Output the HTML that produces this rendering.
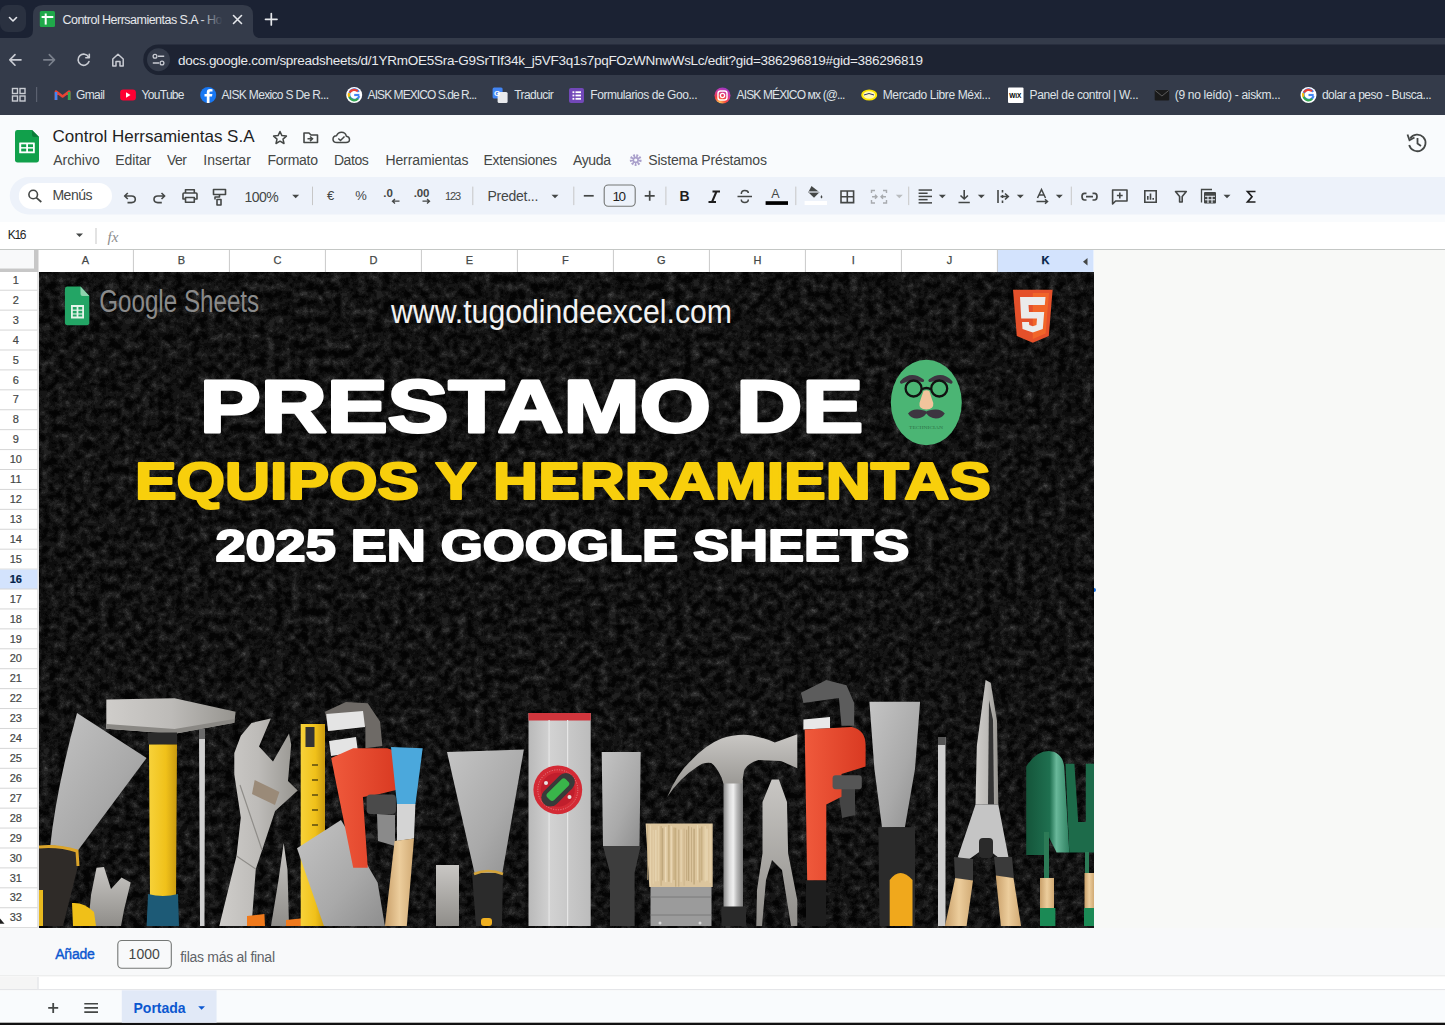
<!DOCTYPE html>
<html><head><meta charset="utf-8">
<style>
*{margin:0;padding:0}
html,body{width:1445px;height:1025px;overflow:hidden;background:#fff}
svg{position:absolute;left:0;top:0}
text{font-family:"Liberation Sans", sans-serif;white-space:pre}
.a{position:absolute}
</style></head><body>
<svg width="1445" height="1025" viewBox="0 0 1445 1025">
<rect x="0" y="0" width="1445" height="38" fill="#1b2233" rx="0" /><rect x="0" y="38" width="1445" height="77" fill="#343b4a" rx="0" /><rect x="0" y="5" width="26" height="27" fill="#2a3140" rx="8" /><path d="M9.5 17.5 L13 21 L16.5 17.5" stroke="#e3e5ea" stroke-width="1.6" fill="none" stroke-linecap="round" stroke-linejoin="round"/><path d="M25 38 Q33 38 33 30 V15 Q33 5 43 5 H243 Q253 5 253 15 V30 Q253 38 261 38Z" fill="#343b4a"/><rect x="39.8" y="11.1" width="15.2" height="15.8" fill="#20a84a" rx="1.5" /><rect x="41.6" y="16" width="11.7" height="2" fill="#ffffff" rx="0" /><rect x="44.7" y="13.5" width="2" height="11.1" fill="#ffffff" rx="0" /><defs><linearGradient id="tabfade" x1="0" x2="1" y1="0" y2="0"><stop offset="0.86" stop-color="#e6e8ec" stop-opacity="1"/><stop offset="1" stop-color="#e6e8ec" stop-opacity="0"/></linearGradient></defs><text x="62.5" y="24" font-size="12.5" fill="url(#tabfade)" font-weight="400" textLength="160" lengthAdjust="spacing" >Control Herrsamientas S.A - Ho</text><path d="M233.5 15.5 L241.5 23.5 M241.5 15.5 L233.5 23.5" stroke="#e6e8ec" stroke-width="1.6" stroke-linecap="round"/><path d="M271.3 13.5 V25 M265.5 19.3 H277" stroke="#e6e8ec" stroke-width="1.7" stroke-linecap="round"/><path d="M21 59.9 H9.8 M15 54.6 L9.8 59.9 L15 65.2" stroke="#c9ccd3" stroke-width="1.6" fill="none" stroke-linecap="round" stroke-linejoin="round"/><path d="M43.8 59.9 H54.5 M49.3 54.6 L54.5 59.9 L49.3 65.2" stroke="#7a808c" stroke-width="1.6" fill="none" stroke-linecap="round" stroke-linejoin="round"/><path d="M88.6 57 A5.6 5.6 0 1 0 89 61.5" stroke="#c9ccd3" stroke-width="1.6" fill="none" stroke-linecap="round"/><path d="M89.3 54.3 V57.8 H85.8" stroke="#c9ccd3" stroke-width="1.6" fill="none" stroke-linecap="round" stroke-linejoin="round"/><path d="M112.8 66 V59 L118 54.2 L123.2 59 V66 H120 V61.5 H116 V66Z" stroke="#c9ccd3" stroke-width="1.5" fill="none" stroke-linejoin="round"/><path d="M158.5 44.4 H1445 V74.9 H158.5 A15.25 15.25 0 0 1 158.5 44.4Z" fill="#1d2332"/><circle cx="158.5" cy="59.7" r="11.5" fill="#343b4a"/><circle cx="155" cy="56.3" r="1.9" stroke="#c9ccd3" stroke-width="1.3" fill="none"/><path d="M158 56.3 H164.2 M152.8 63 H159" stroke="#c9ccd3" stroke-width="1.5"/><circle cx="162" cy="63" r="1.9" stroke="#c9ccd3" stroke-width="1.3" fill="none"/><text x="178" y="64.8" font-size="13.5" fill="#e8eaed" font-weight="400" textLength="745" lengthAdjust="spacing" >docs.google.com/spreadsheets/d/1YRmOE5Sra-G9SrTIf34k_j5VF3q1s7pqFOzWNnwWsLc/edit?gid=386296819#gid=386296819</text><rect x="12.5" y="88.5" width="5" height="5" stroke="#c9ccd3" stroke-width="1.4" fill="none"/><rect x="12.5" y="96.0" width="5" height="5" stroke="#c9ccd3" stroke-width="1.4" fill="none"/><rect x="20.0" y="88.5" width="5" height="5" stroke="#c9ccd3" stroke-width="1.4" fill="none"/><rect x="20.0" y="96.0" width="5" height="5" stroke="#c9ccd3" stroke-width="1.4" fill="none"/><rect x="36" y="87" width="1.2" height="15" fill="#5b6170" rx="0" /><path d="M56 100 V91.5 L62.6 96.5 L69.2 91.5 V100" stroke="#ea4335" stroke-width="2.6" fill="none" stroke-linejoin="round"/><path d="M56 100 V92" stroke="#4285f4" stroke-width="2.6"/><path d="M69.2 100 V92" stroke="#34a853" stroke-width="2.6"/><text x="76.1" y="99.4" font-size="12" fill="#dfe2e7" font-weight="400" textLength="28.7" lengthAdjust="spacing" >Gmail</text><rect x="120.2" y="89.5" width="15.7" height="11" fill="#ff0033" rx="3" /><path d="M126 92.3 V97.7 L130.5 95Z" fill="#fff"/><text x="141.6" y="99.4" font-size="12" fill="#dfe2e7" font-weight="400" textLength="42.9" lengthAdjust="spacing" >YouTube</text><circle cx="208.2" cy="95" r="8" fill="#1877f2"/><path d="M209.5 103 V96.5 H212 L212.4 94 H209.5 V92.6 Q209.5 91.5 210.8 91.5 H212.5 V89.3 Q211.5 89.1 210.2 89.1 Q206.8 89.1 206.8 92.3 V94 H204.5 V96.5 H206.8 V103Z" fill="#fff"/><text x="221.4" y="99.4" font-size="12" fill="#dfe2e7" font-weight="400" textLength="107.6" lengthAdjust="spacing" >AISK Mexico S De R...</text><circle cx="354.2" cy="95" r="8" fill="#fff"/><path d="M358.8 91.8 A5.2 5.2 0 1 0 359.3 96.2" stroke="#4285f4" stroke-width="2.2" fill="none"/><path d="M349.7 92.4 A5.2 5.2 0 0 1 357.7 91.2" stroke="#ea4335" stroke-width="2.2" fill="none"/><path d="M349.2 96.5 A5.2 5.2 0 0 0 357.9 98.7" stroke="#34a853" stroke-width="2.2" fill="none"/><path d="M349.0 93 A5.2 5.2 0 0 0 349.2 96.8" stroke="#fbbc05" stroke-width="2.2" fill="none"/><path d="M354.2 95 H359.4" stroke="#4285f4" stroke-width="2.2"/><text x="367.6" y="99.4" font-size="12" fill="#dfe2e7" font-weight="400" textLength="109.4" lengthAdjust="spacing" >AISK MEXICO S.de R...</text><rect x="492.6" y="87.5" width="10" height="11" fill="#4285f4" rx="1.5" /><rect x="497.6" y="92" width="10" height="11" fill="#e8eaed" rx="1.5" /><text x="494.1" y="96" font-size="8" fill="#fff" font-weight="700" >G</text><text x="514.2" y="99.4" font-size="12" fill="#dfe2e7" font-weight="400" textLength="39.6" lengthAdjust="spacing" >Traducir</text><rect x="569" y="88" width="15" height="15" fill="#7248b9" rx="2" /><rect x="572.5" y="91.3" width="1.8" height="1.8" fill="#fff" rx="0" /><rect x="575.5" y="91.3" width="5.5" height="1.8" fill="#fff" rx="0" /><rect x="572.5" y="94.6" width="1.8" height="1.8" fill="#fff" rx="0" /><rect x="575.5" y="94.6" width="5.5" height="1.8" fill="#fff" rx="0" /><rect x="572.5" y="97.89999999999999" width="1.8" height="1.8" fill="#fff" rx="0" /><rect x="575.5" y="97.89999999999999" width="5.5" height="1.8" fill="#fff" rx="0" /><text x="590.3" y="99.4" font-size="12" fill="#dfe2e7" font-weight="400" textLength="107.3" lengthAdjust="spacing" >Formularios de Goo...</text><defs><radialGradient id="igg" cx="0.3" cy="1" r="1.2"><stop offset="0" stop-color="#fdd459"/><stop offset="0.35" stop-color="#f9423a"/><stop offset="0.7" stop-color="#c837ab"/><stop offset="1" stop-color="#6f3cd4"/></radialGradient></defs><circle cx="722.5" cy="95.5" r="8" fill="url(#igg)"/><rect x="718" y="91" width="9" height="9" fill="none" rx="2.5" stroke="#fff" stroke-width="1.4"/><circle cx="722.5" cy="95.5" r="2.1" stroke="#fff" stroke-width="1.3" fill="none"/><text x="736.5" y="99.4" font-size="12" fill="#dfe2e7" font-weight="400" textLength="108.9" lengthAdjust="spacing" >AISK MÉXICO мх (@...</text><ellipse cx="869.2" cy="95" rx="8" ry="5.5" fill="#ffe600"/><ellipse cx="869.2" cy="95" rx="6" ry="3.8" fill="#fff" opacity="0.7"/><path d="M864 95 Q869 92 874 95" stroke="#2d3277" stroke-width="1" fill="none"/><text x="882.7" y="99.4" font-size="12" fill="#dfe2e7" font-weight="400" textLength="108.2" lengthAdjust="spacing" >Mercado Libre Méxi...</text><rect x="1008" y="87.5" width="15.5" height="15.5" fill="#ffffff" rx="1" /><text x="1009.2" y="98" font-size="6.5" fill="#000" font-weight="700" >WiX</text><text x="1029.5" y="99.4" font-size="12" fill="#dfe2e7" font-weight="400" textLength="109.1" lengthAdjust="spacing" >Panel de control | W...</text><rect x="1154.7" y="90" width="14.5" height="10.5" fill="#1a1a1a" rx="1" /><path d="M1155.2 90.5 L1161.95 96 L1168.7 90.5" stroke="#5a5a5a" stroke-width="1" fill="none"/><text x="1174.8" y="99.4" font-size="12" fill="#dfe2e7" font-weight="400" textLength="105.8" lengthAdjust="spacing" >(9 no leído) - aiskm...</text><circle cx="1308.5" cy="95" r="8" fill="#fff"/><path d="M1313.1 91.8 A5.2 5.2 0 1 0 1313.6 96.2" stroke="#4285f4" stroke-width="2.2" fill="none"/><path d="M1304.0 92.4 A5.2 5.2 0 0 1 1312.0 91.2" stroke="#ea4335" stroke-width="2.2" fill="none"/><path d="M1303.5 96.5 A5.2 5.2 0 0 0 1312.2 98.7" stroke="#34a853" stroke-width="2.2" fill="none"/><path d="M1303.3 93 A5.2 5.2 0 0 0 1303.5 96.8" stroke="#fbbc05" stroke-width="2.2" fill="none"/><path d="M1308.5 95 H1313.7" stroke="#4285f4" stroke-width="2.2"/><text x="1321.9" y="99.4" font-size="12" fill="#dfe2e7" font-weight="400" textLength="109.7" lengthAdjust="spacing" >dolar a peso - Busca...</text><rect x="0" y="115" width="1445" height="107" fill="#f9fbfd" rx="0" /><rect x="0" y="222" width="1445" height="27.5" fill="#ffffff" rx="0" /><path d="M17 130 H32 L39 137 V159.8 Q39 162.4 36.4 162.4 H17.6 Q15 162.4 15 159.8 V132.6 Q15 130 17 130Z" fill="#11a04b"/><path d="M32 130 V135 Q32 137 34 137 H39Z" fill="#0b7d39"/><rect x="19.2" y="142.5" width="15.6" height="10.7" fill="#ffffff" rx="0.5" /><rect x="21.2" y="144.3" width="5" height="2.8" fill="#11a04b" rx="0" /><rect x="28" y="144.3" width="5" height="2.8" fill="#11a04b" rx="0" /><rect x="21.2" y="148.6" width="5" height="2.8" fill="#11a04b" rx="0" /><rect x="28" y="148.6" width="5" height="2.8" fill="#11a04b" rx="0" /><text x="52.5" y="142" font-size="17" fill="#1f1f1f" font-weight="400" textLength="202" lengthAdjust="spacing" >Control Herrsamientas S.A</text><path d="M280 131.5 L281.9 135.6 L286.4 136.1 L283 139.1 L284 143.5 L280 141.2 L276 143.5 L277 139.1 L273.6 136.1 L278.1 135.6Z" stroke="#444746" stroke-width="1.5" fill="none" stroke-linejoin="round"/><path d="M304 133 H309 L311 135 H317.5 V142.5 H304Z" stroke="#444746" stroke-width="1.6" fill="none" stroke-linejoin="round"/><path d="M307.5 138.8 H312 M310 136.5 L312.5 138.8 L310 141.1" stroke="#444746" stroke-width="1.5" fill="none"/><path d="M337 142.5 Q333 142.5 333 139.2 Q333 136 336.5 135.8 Q338 132.3 341.5 132.3 Q345.5 132.3 346.3 136.2 Q349.5 136.5 349.5 139.5 Q349.5 142.5 346 142.5Z" stroke="#444746" stroke-width="1.5" fill="none" stroke-linejoin="round"/><path d="M338.3 138.5 L340.5 140.5 L344.5 136.5" stroke="#444746" stroke-width="1.5" fill="none"/><text x="53.2" y="164.6" font-size="14" fill="#444746" font-weight="400" textLength="46.5" lengthAdjust="spacing" >Archivo</text><text x="115.3" y="164.6" font-size="14" fill="#444746" font-weight="400" textLength="35.9" lengthAdjust="spacing" >Editar</text><text x="167.1" y="164.6" font-size="14" fill="#444746" font-weight="400" textLength="19.9" lengthAdjust="spacing" >Ver</text><text x="203.3" y="164.6" font-size="14" fill="#444746" font-weight="400" textLength="47.5" lengthAdjust="spacing" >Insertar</text><text x="267.4" y="164.6" font-size="14" fill="#444746" font-weight="400" textLength="50.6" lengthAdjust="spacing" >Formato</text><text x="333.9" y="164.6" font-size="14" fill="#444746" font-weight="400" textLength="34.9" lengthAdjust="spacing" >Datos</text><text x="385.4" y="164.6" font-size="14" fill="#444746" font-weight="400" textLength="83.0" lengthAdjust="spacing" >Herramientas</text><text x="483.5" y="164.6" font-size="14" fill="#444746" font-weight="400" textLength="73.5" lengthAdjust="spacing" >Extensiones</text><text x="573" y="164.6" font-size="14" fill="#444746" font-weight="400" textLength="38" lengthAdjust="spacing" >Ayuda</text><text x="648.2" y="164.6" font-size="14" fill="#444746" font-weight="400" textLength="118.8" lengthAdjust="spacing" >Sistema Préstamos</text><g transform="translate(635.7 160)"><circle r="4.3" fill="none" stroke="#a99fcb" stroke-width="3.2" stroke-dasharray="1.7 1.2"/><circle r="3.2" fill="#a99fcb"/><circle r="1.6" fill="#f9fbfd"/></g><path d="M1410.2 138.5 A8.3 8.3 0 1 1 1409.2 145" stroke="#444746" stroke-width="1.8" fill="none"/><path d="M1407.5 134.5 L1409.5 140.2 L1414.5 137.5" stroke="#444746" stroke-width="1.8" fill="none"/><path d="M1417.5 138 V143.5 L1421 146" stroke="#444746" stroke-width="1.8" fill="none"/><path d="M28.5 177 H1445 V214.5 H28.5 A18.75 18.75 0 0 1 28.5 177Z" fill="#edf2fa"/><path d="M31.8 183 H99 A13 13 0 0 1 99 209 H31.8 A13 13 0 0 1 31.8 183Z" fill="#ffffff"/><circle cx="33.2" cy="194.5" r="4.3" stroke="#444746" stroke-width="1.6" fill="none"/><path d="M36.3 197.6 L41.3 202" stroke="#444746" stroke-width="1.7"/><text x="52.4" y="200" font-size="14" fill="#444746" font-weight="400" textLength="40.2" lengthAdjust="spacing" >Menús</text><path d="M125 196 H131.5 Q135.3 196 135.3 199.3 Q135.3 202.6 131.5 202.6 H127.5 M127.8 193 L124.6 196 L127.8 199" stroke="#444746" stroke-width="1.6" fill="none" stroke-linejoin="round"/><path d="M164.3 196 H157.8 Q154 196 154 199.3 Q154 202.6 157.8 202.6 H161.8 M161.5 193 L164.7 196 L161.5 199" stroke="#444746" stroke-width="1.6" fill="none" stroke-linejoin="round"/><path d="M185.5 193 V189.8 H194.3 V193 M185.5 199 H183 V194 Q183 193 184 193 H196 Q197 193 197 194 V199 H194.3 M185.5 197.5 H194.3 V202.2 H185.5Z" stroke="#444746" stroke-width="1.6" fill="none" stroke-linejoin="round"/><path d="M213.5 189.5 H225.5 V194.5 H213.5Z M219.5 194.5 V197 H215 V199.5 M217 199.5 H221 V205 H217Z" stroke="#444746" stroke-width="1.6" fill="none" stroke-linejoin="round"/><text x="244.6" y="201.6" font-size="14" fill="#444746" font-weight="400" textLength="34" lengthAdjust="spacing" >100%</text><path d="M292.2 194.8 H299.2 L295.7 198.3Z" fill="#444746"/><rect x="312" y="186.6" width="1" height="18.5" fill="#c7c7c7" rx="0" /><text x="327" y="199.6" font-size="13" fill="#444746" font-weight="400" >€</text><text x="355.2" y="199.6" font-size="13" fill="#444746" font-weight="400" >%</text><text x="383.2" y="197.4" font-size="11.5" fill="#444746" font-weight="700" >.0</text><path d="M399.5 201.2 H392.5 M395 199 L392.5 201.2 L395 203.4" stroke="#444746" stroke-width="1.3" fill="none"/><text x="413.8" y="197.4" font-size="11.5" fill="#444746" font-weight="700" textLength="15.5" lengthAdjust="spacing" >.00</text><path d="M422.5 201.2 H429.5 M427 199 L429.5 201.2 L427 203.4" stroke="#444746" stroke-width="1.3" fill="none"/><text x="445" y="199.6" font-size="11" fill="#444746" font-weight="400" textLength="16.2" lengthAdjust="spacing" >123</text><rect x="472.3" y="186.6" width="1" height="18.5" fill="#c7c7c7" rx="0" /><text x="487.4" y="200.7" font-size="14" fill="#444746" font-weight="400" textLength="51" lengthAdjust="spacing" >Predet...</text><path d="M551.5 194.8 H558.5 L555.0 198.3Z" fill="#444746"/><rect x="573.3" y="186.6" width="1" height="18.5" fill="#c7c7c7" rx="0" /><path d="M583.8 195.8 H593.7" stroke="#444746" stroke-width="1.7"/><rect x="604.2" y="185" width="31" height="21.2" rx="4" stroke="#747775" stroke-width="1.1" fill="none"/><text x="612.6" y="200.6" font-size="13.5" fill="#1f1f1f" font-weight="400" textLength="13.5" lengthAdjust="spacing" >10</text><path d="M644.7 195.8 H654.7 M649.7 190.8 V200.8" stroke="#444746" stroke-width="1.7"/><rect x="665.4" y="186.6" width="1" height="18.5" fill="#c7c7c7" rx="0" /><text x="679.6" y="201.2" font-size="14" fill="#1f1f1f" font-weight="700" >B</text><path d="M712.5 191.5 H720 M708.5 202 H716 M716.5 191.5 L712 202" stroke="#1f1f1f" stroke-width="2" fill="none"/><path d="M737.5 196.5 H752" stroke="#444746" stroke-width="1.5"/><path d="M741.3 194 Q741.3 190.5 744.8 190.5 Q748.3 190.5 748.3 193 M741.3 199.5 Q741.3 202.5 744.8 202.5 Q748.3 202.5 748.3 199.5" stroke="#444746" stroke-width="1.5" fill="none"/><text x="771.2" y="198.4" font-size="12.5" fill="#444746" font-weight="400" textLength="10.5" lengthAdjust="spacing" >A</text><rect x="765.6" y="201.2" width="22.4" height="3.7" fill="#000000" rx="0" /><rect x="795.3" y="186.6" width="1" height="18.5" fill="#c7c7c7" rx="0" /><path d="M811.5 186 L819.5 192.3 L814 197.8 L808.3 192.2Z" fill="#444746"/><path d="M809 192 H819" stroke="#edf2fa" stroke-width="1.2"/><path d="M821.5 195 Q823.3 197.5 821.5 198.4 Q819.7 197.5 821.5 195Z" fill="#444746"/><rect x="804.6" y="201" width="22.4" height="4" fill="#ffffff" rx="0" /><path d="M841 191 H853.6 V202.6 H841Z M847.3 191 V202.6 M841 196.8 H853.6" stroke="#444746" stroke-width="1.6" fill="none"/><path d="M871.5 193 V190.5 H875 M871.5 200 V203 H875 M886.5 193 V190.5 H883 M886.5 200 V203 H883 M872 196.8 H877 M875 194.8 L877 196.8 L875 198.8 M886 196.8 H881 M883 194.8 L881 196.8 L883 198.8" stroke="#a8abaf" stroke-width="1.4" fill="none"/><path d="M895.8 194.8 H902.8 L899.3 198.3Z" fill="#b9bcbf"/><rect x="908.2" y="186.6" width="1" height="18.5" fill="#c7c7c7" rx="0" /><rect x="918.6" y="189.3" width="13.4" height="1.5" fill="#444746" rx="0" /><rect x="918.6" y="192.5" width="9" height="1.5" fill="#444746" rx="0" /><rect x="918.6" y="195.70000000000002" width="13.4" height="1.5" fill="#444746" rx="0" /><rect x="918.6" y="198.9" width="9" height="1.5" fill="#444746" rx="0" /><rect x="918.6" y="202.10000000000002" width="13.4" height="1.5" fill="#444746" rx="0" /><path d="M938.8 194.8 H945.8 L942.3 198.3Z" fill="#444746"/><path d="M958.5 202.5 H969.8 M964.2 190 V199 M960.5 195.5 L964.2 199 L967.9 195.5" stroke="#444746" stroke-width="1.6" fill="none"/><path d="M977.8 194.8 H984.8 L981.3 198.3Z" fill="#444746"/><path d="M998 190 V203 M1002.5 190 V192.5 M1002.5 195 V198 M1002.5 200.5 V203 M1000.5 196.5 H1008 M1005 193.5 L1008.3 196.5 L1005 199.5" stroke="#444746" stroke-width="1.6" fill="none"/><path d="M1016.8 194.8 H1023.8 L1020.3 198.3Z" fill="#444746"/><path d="M1037.5 198 L1041.5 189.5 L1045.5 198 M1039 195 H1044 M1036.5 201.5 H1047 M1045 199.3 L1047.5 201.5 L1045 203.7" stroke="#444746" stroke-width="1.5" fill="none"/><path d="M1055.8 194.8 H1062.8 L1059.3 198.3Z" fill="#444746"/><rect x="1070.8" y="186.6" width="1" height="18.5" fill="#c7c7c7" rx="0" /><path d="M1086.5 193.3 H1084.5 Q1082 193.3 1082 196.6 Q1082 200 1084.5 200 H1086.5 M1092.5 193.3 H1094.5 Q1097 193.3 1097 196.6 Q1097 200 1094.5 200 H1092.5 M1086 196.6 H1093" stroke="#444746" stroke-width="1.7" fill="none"/><path d="M1112.6 204 V190 H1127 V201 H1115.6Z M1119.8 192.6 V198.4 M1116.9 195.5 H1122.7" stroke="#444746" stroke-width="1.6" fill="none" stroke-linejoin="round"/><path d="M1144.8 190.8 H1156.2 V202.2 H1144.8Z M1147.8 196 V199.8 M1150.5 193.5 V199.8 M1153.2 198 V199.8" stroke="#444746" stroke-width="1.6" fill="none"/><path d="M1175.5 191.5 H1186.3 L1182.2 196.6 V202 H1179.6 V196.6Z" stroke="#444746" stroke-width="1.6" fill="none" stroke-linejoin="round"/><path d="M1201.5 202.5 V189.5 H1212" stroke="#444746" stroke-width="1.3" fill="none"/><rect x="1204" y="192" width="12" height="11.5" rx="1" fill="#444746"/><path d="M1205 196.3 H1215 M1205 199.8 H1215 M1208 196 V203 M1212 196 V203" stroke="#edf2fa" stroke-width="1.1"/><path d="M1223.5 194.8 H1230.5 L1227.0 198.3Z" fill="#444746"/><path d="M1255.5 191.5 H1247.5 L1252 196.8 L1247.5 202 H1255.5" stroke="#1f1f1f" stroke-width="1.7" fill="none" stroke-linejoin="miter"/><text x="7.8" y="239.4" font-size="12" fill="#1f1f1f" font-weight="400" textLength="18.6" lengthAdjust="spacing" >K16</text><path d="M76 233.5 H83 L79.5 237.0Z" fill="#444746"/><rect x="95.5" y="228" width="1" height="16" fill="#c7c7c7" rx="0" /><text x="107.5" y="242" font-size="15" fill="#8c8c8c" font-weight="400" font-style="italic" style="font-family:Liberation Serif">fx</text><rect x="0" y="249" width="1445" height="1" fill="#c4c7c5" rx="0" /><rect x="0" y="250" width="34" height="18.5" fill="#f8f9fa" rx="0" /><rect x="34" y="250" width="4" height="22" fill="#c7c7c7" rx="0" /><rect x="0" y="268.5" width="38" height="3.5" fill="#c7c7c7" rx="0" /><rect x="38" y="250" width="1056" height="22" fill="#ffffff" rx="0" /><rect x="1094" y="250" width="351" height="678" fill="#f8f9f7" rx="0" /><rect x="997" y="250" width="96.5" height="22" fill="#d3e3fd" rx="0" /><rect x="132.9" y="250" width="1" height="22" fill="#c9c9c9" rx="0" /><text x="85.4" y="263.9" font-size="11" fill="#444746" font-weight="400" text-anchor="middle" stroke="#444746" stroke-width="0.25">A</text><rect x="228.9" y="250" width="1" height="22" fill="#c9c9c9" rx="0" /><text x="181.4" y="263.9" font-size="11" fill="#444746" font-weight="400" text-anchor="middle" stroke="#444746" stroke-width="0.25">B</text><rect x="324.9" y="250" width="1" height="22" fill="#c9c9c9" rx="0" /><text x="277.4" y="263.9" font-size="11" fill="#444746" font-weight="400" text-anchor="middle" stroke="#444746" stroke-width="0.25">C</text><rect x="420.9" y="250" width="1" height="22" fill="#c9c9c9" rx="0" /><text x="373.4" y="263.9" font-size="11" fill="#444746" font-weight="400" text-anchor="middle" stroke="#444746" stroke-width="0.25">D</text><rect x="516.9" y="250" width="1" height="22" fill="#c9c9c9" rx="0" /><text x="469.4" y="263.9" font-size="11" fill="#444746" font-weight="400" text-anchor="middle" stroke="#444746" stroke-width="0.25">E</text><rect x="612.9" y="250" width="1" height="22" fill="#c9c9c9" rx="0" /><text x="565.4" y="263.9" font-size="11" fill="#444746" font-weight="400" text-anchor="middle" stroke="#444746" stroke-width="0.25">F</text><rect x="708.9" y="250" width="1" height="22" fill="#c9c9c9" rx="0" /><text x="661.4" y="263.9" font-size="11" fill="#444746" font-weight="400" text-anchor="middle" stroke="#444746" stroke-width="0.25">G</text><rect x="804.9" y="250" width="1" height="22" fill="#c9c9c9" rx="0" /><text x="757.4" y="263.9" font-size="11" fill="#444746" font-weight="400" text-anchor="middle" stroke="#444746" stroke-width="0.25">H</text><rect x="900.9" y="250" width="1" height="22" fill="#c9c9c9" rx="0" /><text x="853.4" y="263.9" font-size="11" fill="#444746" font-weight="400" text-anchor="middle" stroke="#444746" stroke-width="0.25">I</text><rect x="996.9" y="250" width="1" height="22" fill="#c9c9c9" rx="0" /><text x="949.4" y="263.9" font-size="11" fill="#444746" font-weight="400" text-anchor="middle" stroke="#444746" stroke-width="0.25">J</text><text x="1045.4" y="263.9" font-size="11" fill="#041e49" font-weight="700" text-anchor="middle" stroke="#041e49" stroke-width="0.25">K</text><path d="M1087.5 258 V265.5 L1083 261.75Z" fill="#444746"/><rect x="0" y="272" width="38" height="656" fill="#ffffff" rx="0" /><rect x="37.5" y="250" width="1" height="678" fill="#c7c7c7" rx="0" /><rect x="0" y="289.72" width="37.5" height="1" fill="#d6d6d6" rx="0" /><text x="15.8" y="283.9" font-size="11" fill="#444746" font-weight="400" text-anchor="middle" stroke="#444746" stroke-width="0.2">1</text><rect x="0" y="309.64" width="37.5" height="1" fill="#d6d6d6" rx="0" /><text x="15.8" y="303.8" font-size="11" fill="#444746" font-weight="400" text-anchor="middle" stroke="#444746" stroke-width="0.2">2</text><rect x="0" y="329.56" width="37.5" height="1" fill="#d6d6d6" rx="0" /><text x="15.8" y="323.8" font-size="11" fill="#444746" font-weight="400" text-anchor="middle" stroke="#444746" stroke-width="0.2">3</text><rect x="0" y="349.48" width="37.5" height="1" fill="#d6d6d6" rx="0" /><text x="15.8" y="343.7" font-size="11" fill="#444746" font-weight="400" text-anchor="middle" stroke="#444746" stroke-width="0.2">4</text><rect x="0" y="369.4" width="37.5" height="1" fill="#d6d6d6" rx="0" /><text x="15.8" y="363.6" font-size="11" fill="#444746" font-weight="400" text-anchor="middle" stroke="#444746" stroke-width="0.2">5</text><rect x="0" y="389.32" width="37.5" height="1" fill="#d6d6d6" rx="0" /><text x="15.8" y="383.5" font-size="11" fill="#444746" font-weight="400" text-anchor="middle" stroke="#444746" stroke-width="0.2">6</text><rect x="0" y="409.24" width="37.5" height="1" fill="#d6d6d6" rx="0" /><text x="15.8" y="403.4" font-size="11" fill="#444746" font-weight="400" text-anchor="middle" stroke="#444746" stroke-width="0.2">7</text><rect x="0" y="429.16" width="37.5" height="1" fill="#d6d6d6" rx="0" /><text x="15.8" y="423.4" font-size="11" fill="#444746" font-weight="400" text-anchor="middle" stroke="#444746" stroke-width="0.2">8</text><rect x="0" y="449.08" width="37.5" height="1" fill="#d6d6d6" rx="0" /><text x="15.8" y="443.3" font-size="11" fill="#444746" font-weight="400" text-anchor="middle" stroke="#444746" stroke-width="0.2">9</text><rect x="0" y="469.0" width="37.5" height="1" fill="#d6d6d6" rx="0" /><text x="15.8" y="463.2" font-size="11" fill="#444746" font-weight="400" text-anchor="middle" stroke="#444746" stroke-width="0.2">10</text><rect x="0" y="488.92" width="37.5" height="1" fill="#d6d6d6" rx="0" /><text x="15.8" y="483.1" font-size="11" fill="#444746" font-weight="400" text-anchor="middle" stroke="#444746" stroke-width="0.2">11</text><rect x="0" y="508.84" width="37.5" height="1" fill="#d6d6d6" rx="0" /><text x="15.8" y="503.0" font-size="11" fill="#444746" font-weight="400" text-anchor="middle" stroke="#444746" stroke-width="0.2">12</text><rect x="0" y="528.76" width="37.5" height="1" fill="#d6d6d6" rx="0" /><text x="15.8" y="523.0" font-size="11" fill="#444746" font-weight="400" text-anchor="middle" stroke="#444746" stroke-width="0.2">13</text><rect x="0" y="548.68" width="37.5" height="1" fill="#d6d6d6" rx="0" /><text x="15.8" y="542.9" font-size="11" fill="#444746" font-weight="400" text-anchor="middle" stroke="#444746" stroke-width="0.2">14</text><rect x="0" y="568.6" width="37.5" height="1" fill="#d6d6d6" rx="0" /><text x="15.8" y="562.8" font-size="11" fill="#444746" font-weight="400" text-anchor="middle" stroke="#444746" stroke-width="0.2">15</text><rect x="0" y="569.6" width="37.5" height="19.4" fill="#d3e3fd" rx="0" /><rect x="0" y="588.52" width="37.5" height="1" fill="#d6d6d6" rx="0" /><text x="15.8" y="582.7" font-size="11" fill="#041e49" font-weight="700" text-anchor="middle" stroke="#041e49" stroke-width="0.2">16</text><rect x="0" y="608.44" width="37.5" height="1" fill="#d6d6d6" rx="0" /><text x="15.8" y="602.6" font-size="11" fill="#444746" font-weight="400" text-anchor="middle" stroke="#444746" stroke-width="0.2">17</text><rect x="0" y="628.36" width="37.5" height="1" fill="#d6d6d6" rx="0" /><text x="15.8" y="622.6" font-size="11" fill="#444746" font-weight="400" text-anchor="middle" stroke="#444746" stroke-width="0.2">18</text><rect x="0" y="648.28" width="37.5" height="1" fill="#d6d6d6" rx="0" /><text x="15.8" y="642.5" font-size="11" fill="#444746" font-weight="400" text-anchor="middle" stroke="#444746" stroke-width="0.2">19</text><rect x="0" y="668.2" width="37.5" height="1" fill="#d6d6d6" rx="0" /><text x="15.8" y="662.4" font-size="11" fill="#444746" font-weight="400" text-anchor="middle" stroke="#444746" stroke-width="0.2">20</text><rect x="0" y="688.12" width="37.5" height="1" fill="#d6d6d6" rx="0" /><text x="15.8" y="682.3" font-size="11" fill="#444746" font-weight="400" text-anchor="middle" stroke="#444746" stroke-width="0.2">21</text><rect x="0" y="708.04" width="37.5" height="1" fill="#d6d6d6" rx="0" /><text x="15.8" y="702.2" font-size="11" fill="#444746" font-weight="400" text-anchor="middle" stroke="#444746" stroke-width="0.2">22</text><rect x="0" y="727.96" width="37.5" height="1" fill="#d6d6d6" rx="0" /><text x="15.8" y="722.2" font-size="11" fill="#444746" font-weight="400" text-anchor="middle" stroke="#444746" stroke-width="0.2">23</text><rect x="0" y="747.88" width="37.5" height="1" fill="#d6d6d6" rx="0" /><text x="15.8" y="742.1" font-size="11" fill="#444746" font-weight="400" text-anchor="middle" stroke="#444746" stroke-width="0.2">24</text><rect x="0" y="767.8" width="37.5" height="1" fill="#d6d6d6" rx="0" /><text x="15.8" y="762.0" font-size="11" fill="#444746" font-weight="400" text-anchor="middle" stroke="#444746" stroke-width="0.2">25</text><rect x="0" y="787.72" width="37.5" height="1" fill="#d6d6d6" rx="0" /><text x="15.8" y="781.9" font-size="11" fill="#444746" font-weight="400" text-anchor="middle" stroke="#444746" stroke-width="0.2">26</text><rect x="0" y="807.64" width="37.5" height="1" fill="#d6d6d6" rx="0" /><text x="15.8" y="801.8" font-size="11" fill="#444746" font-weight="400" text-anchor="middle" stroke="#444746" stroke-width="0.2">27</text><rect x="0" y="827.56" width="37.5" height="1" fill="#d6d6d6" rx="0" /><text x="15.8" y="821.8" font-size="11" fill="#444746" font-weight="400" text-anchor="middle" stroke="#444746" stroke-width="0.2">28</text><rect x="0" y="847.48" width="37.5" height="1" fill="#d6d6d6" rx="0" /><text x="15.8" y="841.7" font-size="11" fill="#444746" font-weight="400" text-anchor="middle" stroke="#444746" stroke-width="0.2">29</text><rect x="0" y="867.4" width="37.5" height="1" fill="#d6d6d6" rx="0" /><text x="15.8" y="861.6" font-size="11" fill="#444746" font-weight="400" text-anchor="middle" stroke="#444746" stroke-width="0.2">30</text><rect x="0" y="887.32" width="37.5" height="1" fill="#d6d6d6" rx="0" /><text x="15.8" y="881.5" font-size="11" fill="#444746" font-weight="400" text-anchor="middle" stroke="#444746" stroke-width="0.2">31</text><rect x="0" y="907.24" width="37.5" height="1" fill="#d6d6d6" rx="0" /><text x="15.8" y="901.4" font-size="11" fill="#444746" font-weight="400" text-anchor="middle" stroke="#444746" stroke-width="0.2">32</text><rect x="0" y="927.16" width="37.5" height="1" fill="#d6d6d6" rx="0" /><text x="15.8" y="921.4" font-size="11" fill="#444746" font-weight="400" text-anchor="middle" stroke="#444746" stroke-width="0.2">33</text><path d="M0 918.5 L4.5 923.8 H0Z" fill="#1f1f1f"/>
<rect x="0" y="928" width="1445" height="48" fill="#f8f9fa" rx="0" /><rect x="0" y="975.5" width="1445" height="1" fill="#e1e3e1" rx="0" /><rect x="0" y="976.5" width="1445" height="13" fill="#ffffff" rx="0" /><rect x="0" y="976.5" width="37.5" height="13" fill="#f5f5f5" rx="0" /><rect x="37.5" y="977" width="1" height="12" fill="#dadce0" rx="0" /><rect x="0" y="989.3" width="1445" height="1" fill="#dadce0" rx="0" /><rect x="0" y="990.3" width="1445" height="32.4" fill="#f9fbfd" rx="0" /><rect x="0" y="1022.7" width="1445" height="2.3" fill="#111111" rx="0" /><text x="55.2" y="958.8" font-size="14" fill="#0b57d0" font-weight="400" textLength="39.6" lengthAdjust="spacing" stroke="#0b57d0" stroke-width="0.4">Añade</text><rect x="117.8" y="940.5" width="53.5" height="27.7" rx="4" stroke="#747775" stroke-width="1.1" fill="#f8f9fa"/><text x="128.6" y="958.8" font-size="14" fill="#444746" font-weight="400" textLength="31.3" lengthAdjust="spacing" >1000</text><text x="180.2" y="961.5" font-size="14" fill="#5f6368" font-weight="400" textLength="94.8" lengthAdjust="spacing" >filas más al final</text><path d="M53.2 1002.9 V1012.9 M48.2 1007.9 H58.2" stroke="#444746" stroke-width="1.8"/><path d="M84.3 1003.8 H98 M84.3 1007.9 H98 M84.3 1012.1 H98" stroke="#444746" stroke-width="1.6"/><rect x="121.8" y="990.3" width="94.8" height="32.4" fill="#e1e9f7" rx="0" /><text x="133.5" y="1012.8" font-size="14" fill="#0b57d0" font-weight="700" textLength="52.1" lengthAdjust="spacing" >Portada</text><path d="M198.2 1006.3 H205 L201.6 1009.7Z" fill="#0b57d0"/><circle cx="1094" cy="590" r="2" fill="#1a73e8"/>
</svg>
<svg class="a" style="left:39px;top:272px" width="1055" height="656" viewBox="39 272 1055 656">
<defs>
<filter id="nz" x="0" y="0" width="100%" height="100%" color-interpolation-filters="sRGB"><feTurbulence type="fractalNoise" baseFrequency="0.12" numOctaves="4" seed="11" result="a"/><feComponentTransfer in="a" result="b"><feFuncR type="discrete" tableValues="0 0 0.01 0.04 0.075 0.12 0.18 0.26"/></feComponentTransfer><feColorMatrix in="b" type="matrix" values="1 0 0 0 0.012  1 0 0 0 0.012  1 0 0 0 0.012  0 0 0 0 1"/></filter>
</defs>
<rect x="38" y="272" width="1056" height="656" fill="#191919"/>
<rect x="38" y="272" width="1056" height="656" filter="url(#nz)"/>
<!-- Google Sheets logo -->
<path d="M67 286.4 H80.5 L89.3 296 V322.5 Q89.3 325.2 86.6 325.2 H67.6 Q64.9 325.2 64.9 322.5 V289 Q64.9 286.4 67 286.4Z" fill="#23a565"/>
<path d="M80.5 286.4 V294 Q80.5 296 82.5 296 H89.3Z" fill="#8fd3ae"/>
<rect x="71" y="305" width="13" height="13.5" fill="#e6f4ea"/>
<rect x="72.8" y="307" width="3.8" height="2.6" fill="#23a565"/><rect x="78.4" y="307" width="3.8" height="2.6" fill="#23a565"/>
<rect x="72.8" y="310.8" width="3.8" height="2.6" fill="#23a565"/><rect x="78.4" y="310.8" width="3.8" height="2.6" fill="#23a565"/>
<rect x="72.8" y="314.5" width="3.8" height="2" fill="#23a565"/><rect x="78.4" y="314.5" width="3.8" height="2" fill="#23a565"/>
<text x="99.2" y="312.3" font-family="Liberation Sans" font-size="31" fill="#8a8a8a" textLength="160" lengthAdjust="spacingAndGlyphs">Google Sheets</text>
<!-- url -->
<text x="391" y="323.4" font-family="Liberation Sans" font-size="32.5" fill="#f2f2f2" textLength="341" lengthAdjust="spacingAndGlyphs">www.tugodindeexcel.com</text>
<!-- HTML5 -->
<path d="M1013 289.8 H1052.6 L1048.8 336 L1032.8 342.8 L1016.8 336Z" fill="#e4502a"/>
<path d="M1032.8 293 H1049 L1045.6 333.5 L1032.8 339Z" fill="#f16529"/>
<path d="M1020 297 H1045.5 L1044.8 305 H1028.5 L1029 312 H1044.2 L1042.8 329 L1032.8 332.5 L1022.5 329 L1022 322 H1029 L1029.3 325 L1032.8 326.3 L1036.5 325 L1037 318.5 H1021.2Z" fill="#ebebeb"/>
<!-- titles -->
<text x="199.7" y="432.3" font-family="Liberation Sans" font-weight="700" font-size="73.7" fill="#ffffff" stroke="#ffffff" stroke-width="3" stroke-linejoin="round" textLength="663.5" lengthAdjust="spacingAndGlyphs">PRESTAMO DE</text>
<text x="135" y="498.6" font-family="Liberation Sans" font-weight="700" font-size="51.3" fill="#f8cf0c" stroke="#f8cf0c" stroke-width="2.2" stroke-linejoin="round" textLength="855.8" lengthAdjust="spacingAndGlyphs">EQUIPOS Y HERRAMIENTAS</text>
<text x="215.5" y="561" font-family="Liberation Sans" font-weight="700" font-size="43.6" fill="#ffffff" stroke="#ffffff" stroke-width="2" stroke-linejoin="round" textLength="693.7" lengthAdjust="spacingAndGlyphs">2025 EN GOOGLE SHEETS</text>
<!-- mustache logo -->
<ellipse cx="926.3" cy="402.5" rx="35.5" ry="42.7" fill="#4bb574"/>
<path d="M901.5 382 Q911 372 922.5 380.5 Q911 377 901.5 382Z" stroke="#3d3540" stroke-width="3.2" fill="#3d3540" stroke-linejoin="round"/>
<path d="M951 382 Q941.5 372 930 380.5 Q941.5 377 951 382Z" stroke="#3d3540" stroke-width="3.2" fill="#3d3540" stroke-linejoin="round"/>
<circle cx="913.6" cy="388.5" r="8" fill="#4bb574" stroke="#111" stroke-width="2.3"/>
<circle cx="939.2" cy="388.5" r="8" fill="#4bb574" stroke="#111" stroke-width="2.3"/>
<path d="M921.5 389.5 Q926.4 386.5 931.3 389.5" stroke="#111" stroke-width="2.3" fill="none"/>
<path d="M923.5 391 Q921 398 919.5 403 Q918.5 409 926.4 409.5 Q934 409 933.3 403 Q931.5 398 929.3 391 Q926.4 389.5 923.5 391Z" fill="#f2c49c"/>
<path d="M908 413.5 Q911 418.5 917 418.5 Q923 418 926.4 413.5 Q929.8 418 935.8 418.5 Q941.8 418.5 944.8 413.5 Q941 409 935 409.5 Q929 410 926.4 411.5 Q923.8 410 917.8 409.5 Q911.8 409 908 413.5Z" fill="#3d3540"/>
<text x="909" y="429" font-size="4.5" fill="#2c7447" textLength="34" lengthAdjust="spacingAndGlyphs" style="font-family:Liberation Serif">TECHNICIAN</text>
<g id="tools">
<defs>
<linearGradient id="mh" x1="0" x2="1" y1="0" y2="0"><stop offset="0" stop-color="#cfcdca"/><stop offset="0.5" stop-color="#bdbbb8"/><stop offset="1" stop-color="#96948f"/></linearGradient>
<linearGradient id="mv" x1="0" x2="0" y1="0" y2="1"><stop offset="0" stop-color="#c9c7c4"/><stop offset="1" stop-color="#8f8d89"/></linearGradient>
<linearGradient id="chrome" x1="0" x2="1" y1="0" y2="0"><stop offset="0" stop-color="#8a8a8a"/><stop offset="0.3" stop-color="#d8d8d8"/><stop offset="0.5" stop-color="#f0f0f0"/><stop offset="0.7" stop-color="#b8b8b8"/><stop offset="1" stop-color="#7a7a7a"/></linearGradient>
<linearGradient id="scr" x1="0" x2="1" y1="0" y2="1"><stop offset="0" stop-color="#c4c4c4"/><stop offset="0.6" stop-color="#a9a9a9"/><stop offset="1" stop-color="#8e8e8e"/></linearGradient>
<linearGradient id="yel" x1="0" x2="1" y1="0" y2="0"><stop offset="0" stop-color="#f7d23a"/><stop offset="0.6" stop-color="#f0c11a"/><stop offset="1" stop-color="#c99a10"/></linearGradient>
<linearGradient id="red" x1="0" x2="1" y1="0" y2="0"><stop offset="0" stop-color="#f05a3c"/><stop offset="1" stop-color="#d93a22"/></linearGradient>
<linearGradient id="lev" x1="0" x2="1" y1="0" y2="0"><stop offset="0" stop-color="#b9b9b9"/><stop offset="0.35" stop-color="#d2d2d2"/><stop offset="1" stop-color="#bcbcbc"/></linearGradient>
<linearGradient id="grn" x1="0" x2="1" y1="0" y2="0"><stop offset="0" stop-color="#14553a"/><stop offset="0.55" stop-color="#1f7050"/><stop offset="0.7" stop-color="#69b89a"/><stop offset="1" stop-color="#2e8060"/></linearGradient>
<linearGradient id="wood" x1="0" x2="1" y1="0" y2="0"><stop offset="0" stop-color="#c9a06a"/><stop offset="0.5" stop-color="#eccd9c"/><stop offset="1" stop-color="#d1aa74"/></linearGradient>
</defs>
<!-- T1 left scraper -->
<path d="M77 713 L146.6 758 L76 853 L50 848 Q56 790 77 713Z" fill="url(#scr)"/>
<path d="M38 846 Q58 844 77 851 L78 866 L63 926 L38 926Z" fill="#2f2b28"/>
<path d="M39 847 Q58 845 77 851 L78 866" stroke="#dca52a" stroke-width="3" fill="none"/>
<rect x="38" y="890" width="5" height="36" fill="#e8b91f"/>
<!-- T5 cutting pliers -->
<path d="M96.5 867.8 L104 867 L111 889 L121.5 877.6 L130.7 882.5 L124 910 L121 926 L88 926 L91 895Z" fill="url(#mv)"/>
<path d="M72 903 Q84 902 94 912 L96 926 L73 926Z" fill="#f0c018"/>
<!-- T2 hammer -->
<path d="M106.3 699.5 L174.6 698.3 L235.6 711.7 L234.4 722.7 L174.6 733.7 L106.3 728.8Z" fill="url(#mh)"/>
<path d="M106.3 724 L174.6 729 L234.4 719 L234.4 722.7 L174.6 733.7 L106.3 728.8Z" fill="#8a8884"/>
<rect x="147.8" y="732.5" width="29.2" height="12.1" fill="#2a2a2a"/>
<path d="M149 744.6 H177 L176 899 H150Z" fill="url(#yel)"/>
<path d="M148 894 Q163 898 178 894 L179 926 H146.6Z" fill="#1d5a76"/>
<!-- T3 thin screwdriver -->
<path d="M199 731 H205 L204.5 926 H200Z" fill="#d0d0d0"/>
<rect x="199" y="729" width="6" height="10" fill="#6b6b6b"/>
<!-- T4 adjustable wrench -->
<path d="M234.3 753 L240.8 735.8 L251.5 722.9 L270.8 718.6 L259 746.5 L273 761.5 L289 733.6 L291.2 744.4 L288 781 L297.7 790.5 L275.1 811 L262.3 849.6 L255.8 869 L251.5 926 L219.3 926 L236.5 856 L240.8 817.4 L234.3 774.4Z" fill="url(#mh)"/>
<path d="M240 785 L262 850 M236.5 856 L255.8 869" stroke="#8f8d89" stroke-width="1.2" fill="none"/>
<path d="M254.7 780 L279.4 792 L275 805 L252 794Z" fill="#9a8a78"/>
<!-- T6 needle-nose pliers -->
<path d="M283.7 843 L287.5 870 L289 926 L271 926 L278.5 880Z" fill="url(#mv)"/>
<path d="M247 916 L264.4 914 L265 926 L247 926Z" fill="#f07a1c"/>
<path d="M286 920 L305 918 L305 926 L286 926Z" fill="#f07a1c"/>
<!-- T7 tape -->
<rect x="300.7" y="724" width="24.3" height="202" fill="url(#yel)"/>
<rect x="305.5" y="727" width="9" height="20" fill="#333"/>
<path d="M312 765 H318 M312 780 H318 M312 795 H318 M312 810 H318 M312 825 H318 M312 840 H318" stroke="#5a4a10" stroke-width="1.5"/>
<!-- T10 middle putty knife -->
<path d="M297 848.3 L341 820 L377.6 882.4 L384.9 926 L323.9 926Z" fill="url(#scr)"/>
<!-- T8 red pipe wrench -->
<path d="M325 711.7 L345.9 702 L367.8 703.2 L380 721.5 L382.4 745.9 L365.4 748.3 L365.4 726.3 L328.8 731.2Z" fill="#6e6a66"/>
<path d="M326.3 714 L363 711 L365 727 L328 731Z" fill="#e4e4e4"/>
<path d="M329 741 L356 737 L358 752 L331 756Z" fill="#e4e4e4"/>
<path d="M331.2 758 L353.2 748.3 L387.3 748.3 Q397 750 397 762 L397 789.8 L377.6 794.6 L362.9 797 L367.8 867.8 L353.2 867.8 L336 782.4Z" fill="url(#red)"/>
<path d="M377 814 L395 815 L395 846 L378 841Z" fill="#8a8a8a"/>
<rect x="366.6" y="794.6" width="29.3" height="19.4" rx="4" fill="#4a4a4a"/>
<!-- T9 blue brush -->
<path d="M391 747 L422.7 748.3 L415.4 804.4 L397 804.4Z" fill="#4ba8dc"/>
<path d="M397 804 L415.4 804 L414 838.5 L397 841Z" fill="#d4d4d4"/>
<path d="M394.6 841 L414 838.5 L406.8 926 L384.9 926Z" fill="url(#wood)"/>
<!-- T11 large scraper -->
<path d="M447 752 L523.9 749.5 L502 875 L475 875Z" fill="url(#scr)"/>
<path d="M472 873 H503 L502 926 H476Z" fill="#2b2b2b"/>
<path d="M474 874 Q488 868 503 874" stroke="#d4a43a" stroke-width="2.5" fill="none"/>
<rect x="481" y="918" width="11" height="8" rx="3" fill="#f0b020"/>
<!-- T12 small chisel -->
<rect x="436" y="865" width="23" height="61" fill="url(#mv)"/>
<!-- T13 level -->
<rect x="528.5" y="713" width="62.2" height="213" fill="url(#lev)"/>
<rect x="528.5" y="713" width="62.2" height="7.5" fill="#d0353c"/>
<rect x="548.5" y="720" width="1.2" height="206" fill="#e6e6e6"/>
<rect x="567" y="720" width="1.2" height="206" fill="#e6e6e6"/>
<circle cx="557.8" cy="789.8" r="24.4" fill="#d42a35"/>
<circle cx="557.8" cy="789.8" r="20" fill="none" stroke="#e8a0a0" stroke-width="0.8" stroke-dasharray="1 1.5"/><circle cx="557.8" cy="789.8" r="17" fill="#c01e2c"/><circle cx="546" cy="783" r="2" fill="#e6e6e6"/><circle cx="569.5" cy="797" r="2" fill="#e6e6e6"/>
<rect x="538" y="781" width="40" height="18" rx="9" transform="rotate(-45 557.8 789.8)" fill="#3a3a3a"/>
<rect x="545" y="785" width="26" height="9.5" rx="3" transform="rotate(-45 557.8 789.8)" fill="#39b54a"/>
<!-- T14 scraper chisel -->
<path d="M601.7 752 L640.7 752 L639.5 846 L603 846Z" fill="url(#scr)"/>
<path d="M603 846 L640.7 846 L634.6 872.7 L634.6 926 L610 926 L610 872.7Z" fill="#3d3d3d"/>
<!-- T15 wide brush -->
<path d="M645.6 823.5 L712.7 823.5 L712.7 887 L649.3 887Z" fill="#dcc59d"/>
<rect x="650.5" y="887" width="61" height="39" fill="#9b9b9b"/><path d="M650.5 897 H711.5 M650.5 915 H711.5" stroke="#7a7a7a" stroke-width="1"/><circle cx="660" cy="923" r="1.5" fill="#d8d8d8"/><circle cx="700" cy="923" r="1.5" fill="#d8d8d8"/><path d="M647.7 824.8 V880.0" stroke="#c4ab7e" stroke-width="0.8"/><path d="M650.5 825.3 V886.9" stroke="#e8d6b0" stroke-width="0.8"/><path d="M653.2 829.8 V883.8" stroke="#e8d6b0" stroke-width="0.7"/><path d="M655.9 829.8 V881.4" stroke="#efe0c0" stroke-width="0.8"/><path d="M658.3 826.2 V881.2" stroke="#e8d6b0" stroke-width="0.8"/><path d="M661.1 826.0 V885.7" stroke="#c4ab7e" stroke-width="1.1"/><path d="M662.6 828.2 V880.5" stroke="#bfa77c" stroke-width="1.3"/><path d="M665.8 826.9 V882.2" stroke="#efe0c0" stroke-width="1.0"/><path d="M668.9 825.1 V881.8" stroke="#c4ab7e" stroke-width="1.4"/><path d="M671.2 826.1 V882.8" stroke="#efe0c0" stroke-width="0.9"/><path d="M674.1 827.5 V880.1" stroke="#c4ab7e" stroke-width="1.2"/><path d="M675.7 827.7 V886.7" stroke="#c4ab7e" stroke-width="1.2"/><path d="M678.8 829.6 V886.6" stroke="#bfa77c" stroke-width="1.0"/><path d="M681.1 829.4 V881.8" stroke="#efe0c0" stroke-width="0.7"/><path d="M684.1 828.5 V885.6" stroke="#bfa77c" stroke-width="0.6"/><path d="M686.7 829.7 V880.6" stroke="#bfa77c" stroke-width="1.0"/><path d="M688.6 826.2 V881.0" stroke="#bfa77c" stroke-width="1.3"/><path d="M691.5 827.3 V882.2" stroke="#bfa77c" stroke-width="0.8"/><path d="M694.1 828.8 V884.4" stroke="#bfa77c" stroke-width="1.4"/><path d="M697.5 825.0 V880.3" stroke="#efe0c0" stroke-width="0.6"/><path d="M699.9 828.4 V882.4" stroke="#bfa77c" stroke-width="1.0"/><path d="M701.8 826.5 V880.4" stroke="#c4ab7e" stroke-width="1.2"/><path d="M705.2 826.0 V881.4" stroke="#e8d6b0" stroke-width="1.1"/><path d="M707.0 828.7 V880.7" stroke="#efe0c0" stroke-width="0.9"/><path d="M710.1 824.4 V882.9" stroke="#e8d6b0" stroke-width="1.0"/>
<!-- T16 claw hammer -->
<rect x="723.5" y="780" width="19.5" height="128" fill="url(#chrome)"/>
<rect x="721.5" y="906.5" width="24.5" height="19.5" fill="#2a2a2a"/>
<path d="M667.2 796.9 Q678 772 690.7 761 Q705 745 721.5 738.4 Q738 733 752.2 735.4 Q765 738 774.8 742.5 L797.3 734.3 L797.3 768.2 L781 761 L758.4 760 Q746 764 744 771.2 L742 783.5 L723.5 783.5 Q722 779 721.5 777.4 Q716 766 711.2 763 Q703 762 696.9 767.1 Q680 778 667.2 796.9Z" fill="url(#mv)"/>
<!-- T17 pliers -->
<path d="M771.7 779.4 L778.9 779.4 L787 802 L788.1 853.2 L797.3 900 L797.3 926 L791 926 L782 870 L772 860 L766 880 L762 926 L756.3 926 L757 890 L762.5 853.2 L762.5 802Z" fill="url(#mv)"/>
<!-- T18 red pipe wrench 2 -->
<path d="M800.9 692.8 L826.3 680.1 L846.5 685.2 L854.2 703 L854.2 725.8 L841.5 725.8 L838.9 697.9 L803.4 703Z" fill="#5c5c5c"/>
<path d="M803.4 719.5 L830 717 L830 728.3 L803.4 729.6Z" fill="#e8e8e8"/>
<path d="M838 789 L855 789 L855 815 L842 818Z" fill="#444"/>
<path d="M804.7 729.6 L851.6 727 Q865.6 730 865.6 745 L865.6 766.4 L841.5 774 L841.5 796.8 L826.3 804.4 L826.3 880.5 L807.2 880.5Z" fill="url(#red)"/>
<rect x="832.6" y="775.3" width="29.2" height="13.9" rx="3" fill="#555"/>
<rect x="806" y="880.5" width="20" height="45.5" fill="#1e1e1e"/>
<!-- T19 wide scraper -->
<path d="M869.4 701.7 L920.1 701.7 L915 769 L904.9 827.3 L882 827.3 L874.4 769Z" fill="url(#scr)"/>
<path d="M878.3 827.3 L915 827.3 L915 926 L879.5 926Z" fill="#2b2b2b"/>
<path d="M889.7 880 Q900 866 912.5 880 L912.5 926 H889.7Z" fill="#f0a81c"/>
<!-- T20 thin screwdriver -->
<rect x="938" y="737" width="7.5" height="189" fill="#cfcfcf"/>
<rect x="938" y="737" width="7.5" height="8" fill="#555"/>
<!-- T21 shears -->
<path d="M985.6 680 L990.7 682.7 L997 720.7 L998.3 804.4 L975.5 804.4 L976.8 746Z" fill="url(#mh)"/>
<path d="M989 700 L993 720 L994 805 L988 805Z" fill="#333"/>
<path d="M975.5 804.4 L998.3 804.4 L1008.5 857.6 L998.3 857.6 L985.6 847.5 L968 860 L957.7 857.6Z" fill="#c5c5c5"/>
<rect x="979" y="838" width="14" height="20" rx="4" fill="#2a2a2a"/>
<path d="M954 857 L973 859 L973 881 L955 878Z" fill="#3a3a3a"/>
<path d="M994 857 L1012 857 L1014 878 L996 876Z" fill="#3a3a3a"/>
<path d="M955.2 878 L973 880.4 L966.6 926 L945 926Z" fill="url(#wood)"/>
<path d="M995.8 875.4 L1013.5 878 L1021.1 926 L1000.9 926Z" fill="url(#wood)"/>
<!-- T22 trowel -->
<path d="M1026.2 766.4 Q1036 751 1049 751.1 Q1062 752 1064.2 766.4 L1069.3 852.6 L1056.6 852.6 L1046.5 832.3 L1044 855.1 L1026.2 855.1Z" fill="url(#grn)"/>
<rect x="1044" y="832" width="5" height="46" fill="#2c7a56"/>
<rect x="1040" y="878" width="14" height="30" fill="url(#wood)"/>
<rect x="1040" y="908" width="15.4" height="18" fill="#1b8a55"/>
<!-- T23 rake -->
<path d="M1065.5 763.8 L1074.4 763.8 L1078.2 822 L1085.8 822 L1085.8 763.8 L1094 763.8 L1094 852.6 L1069.3 852.6Z" fill="#1d6b4a"/>
<rect x="1085" y="852" width="4" height="21" fill="#2c7a56"/>
<rect x="1084.5" y="873" width="9.5" height="35" fill="url(#wood)"/>
<rect x="1084" y="908" width="10" height="18" fill="#1b8a55"/>
</g>
</svg>
</body></html>
